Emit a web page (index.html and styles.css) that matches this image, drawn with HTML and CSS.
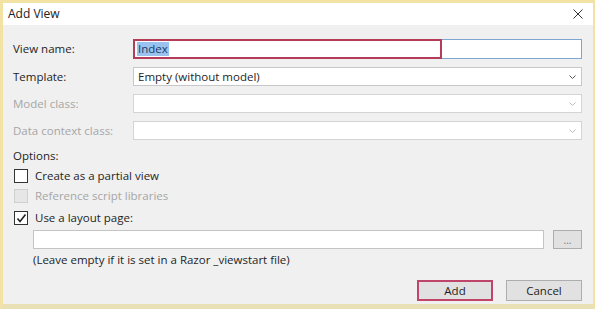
FILE: index.html
```html
<!DOCTYPE html>
<html lang="en">
<head>
    <meta charset="UTF-8">
    <title>Add View</title>
    <link rel="stylesheet" href="styles.css">
</head>
<body>
    <div class="window">
        <div class="titlebar">
            <span class="title">Add View</span>
            <svg class="close" width="10" height="10" viewBox="0 0 10 10">
                <path d="M0.5 0.5 L9.5 9.5 M9.5 0.5 L0.5 9.5" stroke="#333" stroke-width="1" fill="none"/>
            </svg>
        </div>

        <div class="content">
            <div class="fields">
                <label class="label">View name:</label>
                <div class="textbox focused">
                    <span class="selected">Index</span>
                    <div class="highlight"></div>
                </div>

                <label class="label">Template:</label>
                <div class="select">
                    <span>Empty (without model)</span>
                    <svg class="chevron" width="7" height="4" viewBox="0 0 7 4"><path d="M0.5 0.5 L3.5 3.5 L6.5 0.5" stroke="#555" fill="none"/></svg>
                </div>

                <label class="label disabled">Model class:</label>
                <div class="select off">
                    <span></span>
                    <svg class="chevron" width="7" height="4" viewBox="0 0 7 4"><path d="M0.5 0.5 L3.5 3.5 L6.5 0.5" stroke="#bbb" fill="none"/></svg>
                </div>

                <label class="label disabled">Data context class:</label>
                <div class="select off">
                    <span></span>
                    <svg class="chevron" width="7" height="4" viewBox="0 0 7 4"><path d="M0.5 0.5 L3.5 3.5 L6.5 0.5" stroke="#bbb" fill="none"/></svg>
                </div>
            </div>

            <div class="options-title">Options:</div>

            <div class="check-row first">
                <span class="box"></span>
                <span>Create as a partial view</span>
            </div>
            <div class="check-row disabled">
                <span class="box off"></span>
                <span>Reference script libraries</span>
            </div>
            <div class="check-row last">
                <span class="box">
                    <svg width="11" height="11" viewBox="0 0 11 11"><path d="M1.5 5.5 L4 8.5 L9.5 1.5" stroke="#222" stroke-width="1.6" fill="none"/></svg>
                </span>
                <span>Use a layout page:</span>
            </div>

            <div class="layout-row">
                <div class="textbox plain"></div>
                <button class="browse">...</button>
            </div>
            <div class="hint">(Leave empty if it is set in a Razor _viewstart file)</div>

            <div class="actions">
                <button class="btn primary">Add</button>
                <button class="btn">Cancel</button>
            </div>
        </div>
    </div>
</body>
</html>
```

FILE: styles.css
```css
* {
    margin: 0;
    padding: 0;
    box-sizing: border-box;
}

body {
    font-family: "Segoe UI", "Open Sans", sans-serif;
    font-size: 11.5px;
    line-height: 14px;
    color: #1e1e1e;
    background: #f0f0f0;
}

.window {
    width: 595px;
    height: 309px;
    border: 3px solid #f2e2a4;
    border-bottom: 5px solid #e9e0b6;
    border-right-width: 2px;
    background: #f0f0f0;
    display: flex;
    flex-direction: column;
}

.titlebar {
    height: 22px;
    background: #ffffff;
    display: flex;
    align-items: center;
    justify-content: space-between;
    padding: 0 10px 0 5px;
}

.title {
    font-size: 12px;
    color: #222;
}

.content {
    flex: 1;
    padding: 14px 11px 0 10px;
    display: flex;
    flex-direction: column;
}

.fields {
    display: grid;
    grid-template-columns: 120px 1fr;
    row-gap: 8px;
    align-items: center;
}

.label.disabled,
.check-row.disabled {
    color: #a6a6a6;
}

.textbox {
    height: 20px;
    background: #fff;
    border: 1px solid #c4c4c4;
    position: relative;
    display: flex;
    align-items: center;
    padding-left: 3px;
}

.textbox.focused {
    border-color: #7ea6d0;
}

.selected {
    background: #99c3ee;
    color: #1b3c66;
    padding: 0 1px;
    line-height: 14px;
}

.highlight {
    position: absolute;
    left: -1px;
    top: -1px;
    width: 309px;
    height: 20px;
    border: 2px solid #b53c58;
}

.select {
    height: 19px;
    background: #fff;
    border: 1px solid #c8c8c8;
    display: flex;
    align-items: center;
    justify-content: space-between;
    padding: 0 5px 0 4px;
}

.select.off {
    border-color: #d4d4d4;
}

.options-title {
    margin-top: 9px;
}

.check-row {
    display: flex;
    align-items: center;
    gap: 7px;
    height: 14px;
    margin-top: 6px;
    padding-left: 1px;
}

.check-row.last {
    margin-top: 8px;
}

.box {
    width: 14px;
    height: 14px;
    border: 1px solid #333;
    background: #fff;
    display: flex;
    align-items: center;
    justify-content: center;
}

.box.off {
    border-color: #cfcfcf;
    background: #e6e6e6;
}

.layout-row {
    display: flex;
    gap: 9px;
    margin: 5px 0 0 20px;
}

.layout-row .textbox {
    flex: 1;
    height: 19px;
}

.browse {
    width: 29px;
    height: 19px;
    border: 1px solid #adadad;
    background: #e1e1e1;
    font-family: inherit;
    font-size: 10px;
    color: #777;
    line-height: 12px;
}

.hint {
    margin: 4px 0 0 20px;
}

.actions {
    margin-top: auto;
    margin-bottom: 3px;
    display: flex;
    justify-content: flex-end;
    gap: 13px;
}

.btn {
    width: 76px;
    height: 21px;
    border: 1px solid #adadad;
    background: #e1e1e1;
    font-family: inherit;
    font-size: 11.5px;
    color: #1e1e1e;
}

.btn.primary {
    border: 2px solid #c0456a;
}
```
